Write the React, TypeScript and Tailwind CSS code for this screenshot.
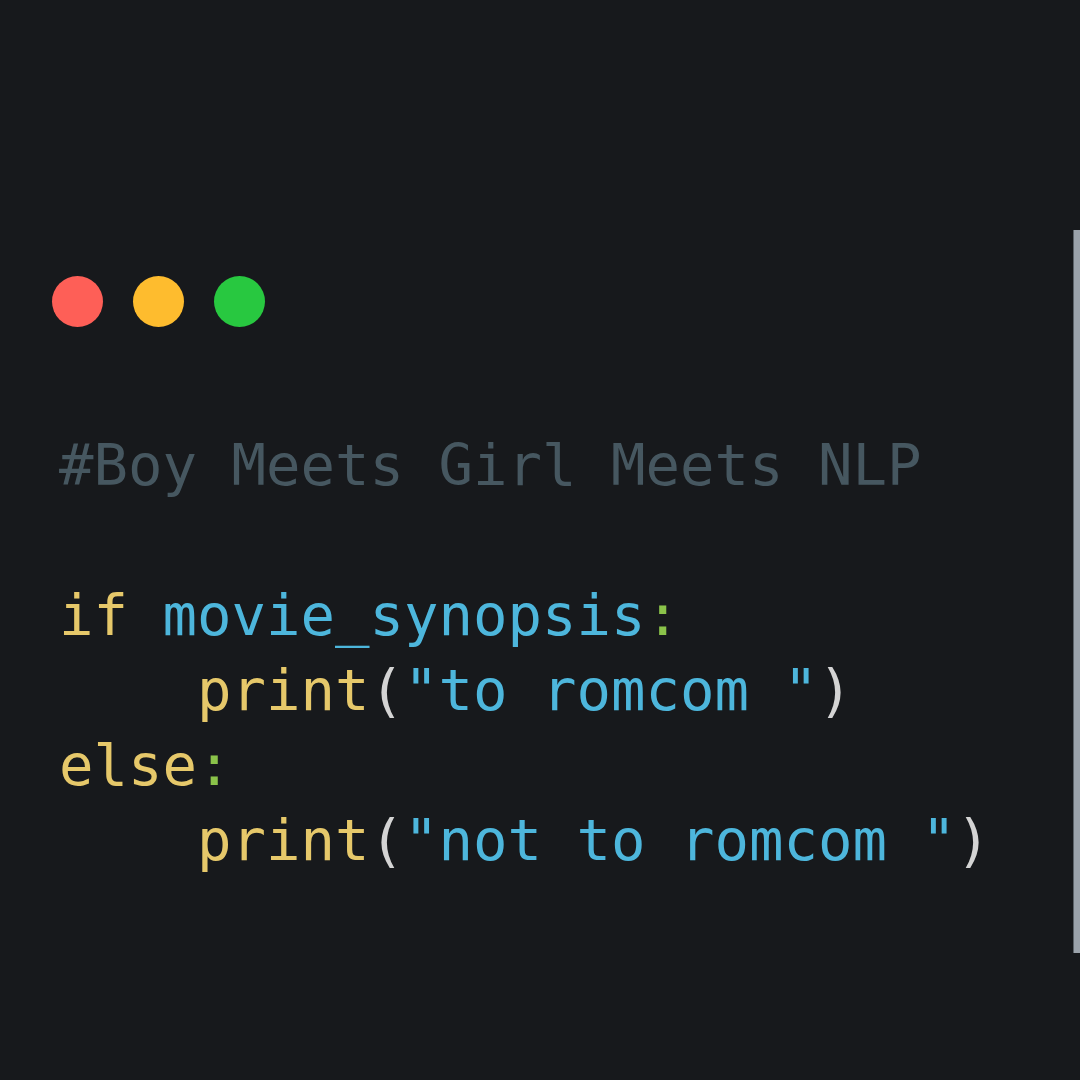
import React from "react";

const Y = "text-[#e6c86a]";
const B = "text-[#4db6dc]";
const G = "text-[#8bc34a]";
const W = "text-[#d4d4d4]";

const Dot = ({ color }: { color: string }) => (
  <span className={`block w-[51px] h-[51px] rounded-full ${color}`} />
);

export default function App() {
  return (
    <div className="w-[1080px] h-[1080px] bg-[#17191c] flex overflow-hidden">
      <div className="flex flex-col pt-[276px] pl-[52px] flex-1">
        <div className="flex gap-[30px]">
          <Dot color="bg-[#fe5f57]" />
          <Dot color="bg-[#febc2e]" />
          <Dot color="bg-[#28c840]" />
        </div>

        <pre
          className="mt-[101px] ml-[7px] text-[57.3px] leading-[75px] whitespace-pre"
          style={{ fontFamily: '"DejaVu Sans Mono", monospace' }}
        >
          <div className="text-[#465760]">#Boy Meets Girl Meets NLP</div>
          <div>&nbsp;</div>
          <div>
            <span className={Y}>if</span> <span className={B}>movie_synopsis</span>
            <span className={G}>:</span>
          </div>
          <div>
            {"    "}
            <span className={Y}>print</span>
            <span className={W}>(</span>
            <span className={B}>"to romcom "</span>
            <span className={W}>)</span>
          </div>
          <div>
            <span className={Y}>else</span>
            <span className={G}>:</span>
          </div>
          <div>
            {"    "}
            <span className={Y}>print</span>
            <span className={W}>(</span>
            <span className={B}>"not to romcom "</span>
            <span className={W}>)</span>
          </div>
        </pre>
      </div>

      <div className="mt-[230px] w-[7px] h-[723px] bg-[#9ba3ab] border-l border-[#5c6369] shrink-0" />
    </div>
  );
}
